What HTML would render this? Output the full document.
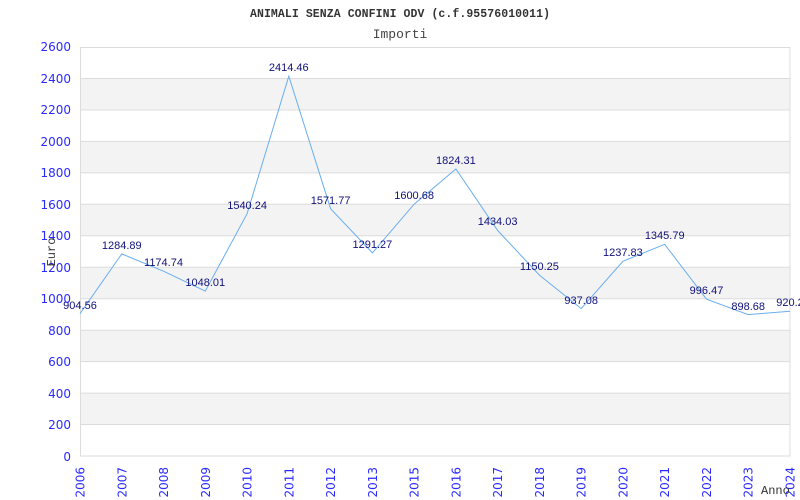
<!DOCTYPE html>
<html><head><meta charset="utf-8"><style>
html,body{margin:0;padding:0;background:#fff;width:800px;height:500px;overflow:hidden}
</style></head><body>
<svg width="800" height="500" xmlns="http://www.w3.org/2000/svg" style="display:block">
<g fill="#f3f3f3">
<rect x="80" y="78.5" width="710" height="31.5"/>
<rect x="80" y="141.4" width="710" height="31.5"/>
<rect x="80" y="204.3" width="710" height="31.5"/>
<rect x="80" y="267.2" width="710" height="31.5"/>
<rect x="80" y="330.2" width="710" height="31.5"/>
<rect x="80" y="393.1" width="710" height="31.5"/>
</g>
<g stroke="#dcdcdc" stroke-width="1">
<line x1="80" x2="790" y1="78.5" y2="78.5"/><line x1="80" x2="790" y1="110" y2="110"/>
<line x1="80" x2="790" y1="141.4" y2="141.4"/><line x1="80" x2="790" y1="172.9" y2="172.9"/>
<line x1="80" x2="790" y1="204.3" y2="204.3"/><line x1="80" x2="790" y1="235.8" y2="235.8"/>
<line x1="80" x2="790" y1="267.2" y2="267.2"/><line x1="80" x2="790" y1="298.7" y2="298.7"/>
<line x1="80" x2="790" y1="330.2" y2="330.2"/><line x1="80" x2="790" y1="361.6" y2="361.6"/>
<line x1="80" x2="790" y1="393.1" y2="393.1"/><line x1="80" x2="790" y1="424.5" y2="424.5"/>
<rect x="80.5" y="47.5" width="709.5" height="408.5" fill="none"/>
</g>
<polyline fill="none" stroke="#6aaef0" stroke-width="1" points="80,313.7 121.8,253.9 163.5,271.2 205.3,291.1 247.1,213.7 288.8,76.2 330.6,208.7 372.4,252.9 414.1,204.2 455.9,169 497.6,230.4 539.4,275.1 581.2,308.6 622.9,261.3 664.7,244.3 706.5,299.2 748.2,314.6 790,311.2"/>
<g font-family="'Liberation Sans',sans-serif" font-size="11" fill="#10107a" text-anchor="middle">
<text x="80" y="309">904.56</text><text x="121.8" y="249">1284.89</text><text x="163.5" y="266">1174.74</text>
<text x="205.3" y="286">1048.01</text><text x="247.1" y="209">1540.24</text><text x="288.8" y="71">2414.46</text>
<text x="330.6" y="204">1571.77</text><text x="372.4" y="248">1291.27</text><text x="414.1" y="199">1600.68</text>
<text x="455.9" y="164">1824.31</text><text x="497.6" y="225">1434.03</text><text x="539.4" y="270">1150.25</text>
<text x="581.2" y="304">937.08</text><text x="622.9" y="256">1237.83</text><text x="664.7" y="239">1345.79</text>
<text x="706.5" y="294">996.47</text><text x="748.2" y="310">898.68</text><text x="790" y="306">920.2</text>
</g>
<g font-family="'DejaVu Sans',sans-serif" font-size="12" fill="#2a2aff" text-anchor="end">
<text x="71" y="51">2600</text><text x="71" y="83">2400</text><text x="71" y="114">2200</text>
<text x="71" y="146">2000</text><text x="71" y="177">1800</text><text x="71" y="209">1600</text>
<text x="71" y="240">1400</text><text x="71" y="272">1200</text><text x="71" y="303">1000</text>
<text x="71" y="335">800</text><text x="71" y="366">600</text><text x="71" y="398">400</text>
<text x="71" y="429">200</text><text x="71" y="461">0</text>
</g>
<g font-family="'DejaVu Sans',sans-serif" font-size="12" fill="#2a2aff" text-anchor="end">
<text transform="translate(84.5,467) rotate(-90)">2006</text>
<text transform="translate(126.3,467) rotate(-90)">2007</text>
<text transform="translate(168,467) rotate(-90)">2008</text>
<text transform="translate(209.8,467) rotate(-90)">2009</text>
<text transform="translate(251.6,467) rotate(-90)">2010</text>
<text transform="translate(293.3,467) rotate(-90)">2011</text>
<text transform="translate(335.1,467) rotate(-90)">2012</text>
<text transform="translate(376.9,467) rotate(-90)">2013</text>
<text transform="translate(418.6,467) rotate(-90)">2015</text>
<text transform="translate(460.4,467) rotate(-90)">2016</text>
<text transform="translate(502.1,467) rotate(-90)">2017</text>
<text transform="translate(543.9,467) rotate(-90)">2018</text>
<text transform="translate(585.7,467) rotate(-90)">2019</text>
<text transform="translate(627.4,467) rotate(-90)">2020</text>
<text transform="translate(669.2,467) rotate(-90)">2021</text>
<text transform="translate(711,467) rotate(-90)">2022</text>
<text transform="translate(752.7,467) rotate(-90)">2023</text>
<text transform="translate(794.5,467) rotate(-90)">2024</text>
</g>
<text x="400" y="17" text-anchor="middle" font-family="'Liberation Mono',monospace" font-size="11.5" font-weight="bold" fill="#333" textLength="300">ANIMALI SENZA CONFINI ODV (c.f.95576010011)</text>
<text x="400" y="38" text-anchor="middle" font-family="'Liberation Mono',monospace" font-size="13" fill="#444">Importi</text>
<text transform="translate(55,252) rotate(-90)" text-anchor="middle" font-family="'Liberation Mono',monospace" font-size="12" fill="#333">Euro</text>
<text x="761" y="494" font-family="'Liberation Mono',monospace" font-size="12" fill="#333">Anno</text>
</svg>
</body></html>
